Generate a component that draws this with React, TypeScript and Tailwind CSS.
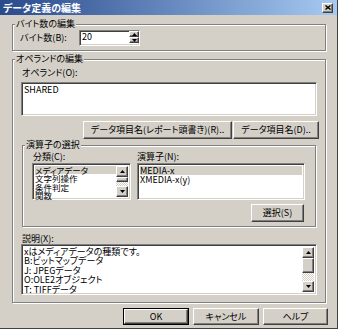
import type { ReactNode } from 'react'

const sunken =
  'border border-t-[#808080] border-l-[#808080] border-b-white border-r-white shadow-[inset_1px_1px_0_#404040,inset_-1px_-1px_0_#d4d0c8] bg-white'
const raised =
  'border border-t-white border-l-white border-b-[#404040] border-r-[#404040] shadow-[inset_-1px_-1px_0_#808080] bg-[#d4d0c8]'
const etched = 'border border-[#808080] shadow-[inset_1px_1px_0_#fff,1px_1px_0_#fff]'
const checker = 'bg-[repeating-conic-gradient(#d4d0c8_0_25%,#fff_0_50%)] bg-[length:2px_2px]'

function Arrow({ up }: { up?: boolean }) {
  return (
    <svg width="5" height="3" viewBox="0 0 5 3">
      <path d={up ? 'M0 3h5L2.5 0z' : 'M0 0h5L2.5 3z'} fill="#000" />
    </svg>
  )
}

function Group({ title, className, children }: { title: string; className?: string; children?: ReactNode }) {
  return (
    <div className={`relative ${etched} ${className ?? ''}`}>
      <span className="absolute -top-[6px] left-[2px] bg-[#d4d0c8] px-px leading-[10px] whitespace-nowrap">{title}</span>
      {children}
    </div>
  )
}

function Button({ children, className }: { children: ReactNode; className?: string }) {
  return (
    <div className={`${raised} flex items-center justify-center leading-[10px] whitespace-nowrap ${className ?? ''}`}>
      {children}
    </div>
  )
}

function ScrollBar({ thumb, track }: { thumb: number; track: number }) {
  return (
    <div className="flex w-[12px] shrink-0 flex-col">
      <div className={`${raised} flex h-[11px] items-center justify-center`}>
        <Arrow up />
      </div>
      <div className={raised} style={{ height: thumb }} />
      <div className={`${checker} grow`} style={{ minHeight: track }} />
      <div className={`${raised} flex h-[11px] items-center justify-center`}>
        <Arrow />
      </div>
    </div>
  )
}

export default function App() {
  return (
    <div className="h-[331px] w-[339px] bg-white text-[9px] text-black [font-family:'Noto_Sans_CJK_JP',sans-serif] [font-feature-settings:'palt']">
      <div className="flex h-[329px] w-[338px] flex-col border-r border-b border-r-[#404040] border-b-[#404040] bg-[#d4d0c8]">
        {/* title bar */}
        <div className="flex h-[15px] items-center bg-gradient-to-r from-[#2a4a8c] to-[#a6caf0] pl-[3px] pr-[4px]">
          <span className="text-[10px] font-bold leading-[12px] text-white">データ定義の編集</span>
          <div className={`${raised} ml-auto flex h-[10px] w-[11px] items-center justify-center`}>
            <svg width="6" height="5" viewBox="0 0 6 5">
              <path d="M0.5 0.5l5 4M5.5 0.5l-5 4" stroke="#000" strokeWidth="1.4" />
            </svg>
          </div>
        </div>

        <div className="pl-[12px]">
          <Group title="バイト数の編集" className="mt-[9px] h-[27px] w-[314px]">
            <div className="flex items-center pt-[5px] pl-[7px]">
              <span className="w-[59px] leading-[10px]">バイト数(B):</span>
              <div className={`${sunken} flex h-[16px] w-[61px]`}>
                <span className="grow pl-[2px] leading-[12px]">20</span>
                <div className="flex w-[10px] flex-col">
                  <div className={`${raised} flex h-[6px] items-center justify-center`}>
                    <Arrow up />
                  </div>
                  <div className={`${raised} flex h-[6px] items-center justify-center`}>
                    <Arrow />
                  </div>
                </div>
              </div>
            </div>
          </Group>

          <Group title="オペランドの編集" className="mt-[8px] h-[244px] w-[314px]">
            <div className="flex flex-col pt-[8px] pl-[8px]">
              <span className="ml-px leading-[10px]">オペランド(O):</span>
              <div className={`${sunken} mt-[4px] h-[34px] w-[296px] pl-[2px] pt-[2px] leading-[10px]`}>SHARED</div>
              <div className="mt-[5px] ml-[62px] flex gap-px">
                <Button className="h-[18px] w-[149px]">データ項目名(レポート頭書き)(R)..</Button>
                <Button className="h-[18px] w-[86px]">データ項目名(D)..</Button>
              </div>

              <Group title="演算子の選択" className="mt-[6px] ml-px h-[82px] w-[294px]">
                <div className="flex flex-col pt-[6px] pl-[9px]">
                  <div className="flex gap-[6px]">
                    <div className="flex flex-col">
                      <span className="ml-px leading-[10px]">分類(C):</span>
                      <div className={`${sunken} mt-px flex h-[37px] w-[99px] p-[2px]`}>
                        <div className="grow text-[8.5px] leading-[8.4px]">
                          <div className="bg-[#d4d0c8]">メディアデータ</div>
                          <div>文字列操作</div>
                          <div>条件判定</div>
                          <div>関数</div>
                        </div>
                        <ScrollBar thumb={6} track={4} />
                      </div>
                    </div>
                    <div className="flex flex-col">
                      <span className="leading-[10px]">演算子(N):</span>
                      <div className={`${sunken} mt-px h-[37px] w-[168px] p-[2px] leading-[9px]`}>
                        <div className="bg-[#d4d0c8]">MEDIA-x</div>
                        <div>XMEDIA-x(y)</div>
                      </div>
                    </div>
                  </div>
                  <Button className="mt-[4px] ml-[219px] h-[18px] w-[53px]">選択(S)</Button>
                </div>
              </Group>

              <span className="mt-[7px] ml-px leading-[10px]">説明(X):</span>
              <div className={`${sunken} flex h-[51px] w-[296px] p-[2px]`}>
                <div className="grow leading-[9.4px]">
                  <div>xはメディアデータの種類です。</div>
                  <div>B:ビットマップデータ</div>
                  <div>J: JPEGデータ</div>
                  <div>O:OLE2オブジェクト</div>
                  <div>T: TIFFデータ</div>
                </div>
                <ScrollBar thumb={15} track={8} />
              </div>
            </div>
          </Group>
        </div>

        <div className="mt-[5px] ml-[123px] flex gap-[4px]">
          <div className="h-[17px] w-[66px] border border-black">
            <Button className="h-full w-full">OK</Button>
          </div>
          <Button className="h-[17px] w-[66px]">キャンセル</Button>
          <Button className="h-[17px] w-[65px]">ヘルプ</Button>
        </div>
      </div>
    </div>
  )
}
